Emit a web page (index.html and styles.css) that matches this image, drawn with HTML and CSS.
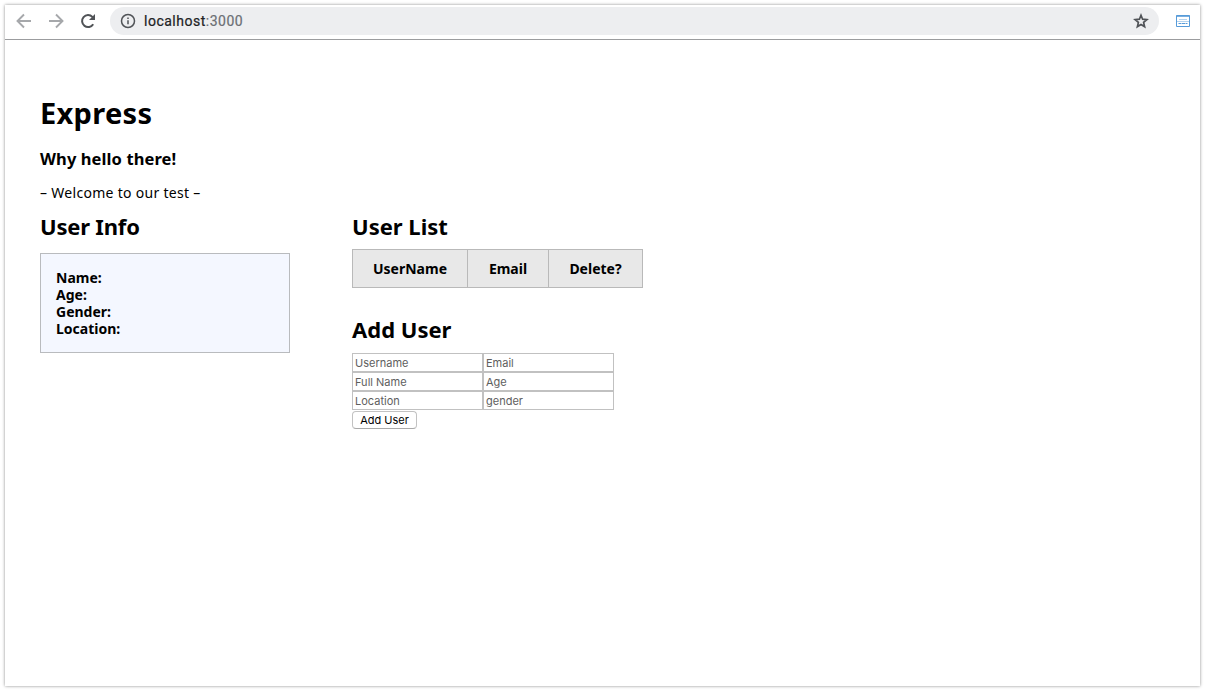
FILE: index.html
```html
<!DOCTYPE html>
<html lang="en">
<head>
<meta charset="utf-8">
<title>Express</title>
<link rel="stylesheet" href="styles.css">
</head>
<body>
<div class="window">
  <header class="toolbar">
    <svg class="icon back" viewBox="0 0 16 16"><path d="M15 8H2M8 1.5 1.5 8 8 14.5"/></svg>
    <svg class="icon forward" viewBox="0 0 16 16"><path d="M1 8h13M8 1.5 14.5 8 8 14.5"/></svg>
    <svg class="icon reload" viewBox="0 0 16 16"><path d="M13.2 11.2A6 6 0 1 1 12.4 3.9L14 5.5"/><path class="solid" d="M15 1v6H9z"/></svg>
    <div class="address">
      <svg class="icon info" viewBox="0 0 16 16"><circle cx="8" cy="8" r="6.5"/><path d="M8 7.2v4M8 4.4v1.6"/></svg>
      <span class="url">localhost<span class="port">:3000</span></span>
      <svg class="icon star" viewBox="0 0 16 16"><path d="m8 2.300 1.600 3.900 4.300.4-3.300 2.800 1 4.200L8 11.400l-3.600 2.200 1-4.200L2.100 6.600l4.300-.4z"/></svg>
    </div>
    <svg class="extension" viewBox="0 0 16 14"><path class="frame" d="M1.500 1.500h13v11h-13z"/><path class="bar" d="M1.500 2h13"/><path class="faint" d="M4 5.500h8"/><path class="faint" d="M2 7.500h12"/><path class="dash" d="M3.500 9.500h9"/></svg>
  </header>
  <main class="page">
    <h1 class="title">Express</h1>
    <h3 class="greeting">Why hello there!</h3>
    <p class="welcome">– Welcome to our test –</p>
    <div class="columns">
      <section class="info-column">
        <h2 class="heading user-info">User Info</h2>
        <div class="card"><b>Name:</b><b>Age:</b><b>Gender:</b><b>Location:</b></div>
      </section>
      <section class="list-column">
        <h2 class="heading user-list">User List</h2>
        <div class="table"><b class="cell">UserName</b><b class="cell">Email</b><b class="cell">Delete?</b></div>
        <h2 class="heading add-heading">Add User</h2>
        <div class="form">
          <input class="field" placeholder="Username"><input class="field" placeholder="Email">
          <input class="field" placeholder="Full Name"><input class="field" placeholder="Age">
          <input class="field" placeholder="Location"><input class="field" placeholder="gender">
        </div>
        <button class="submit">Add User</button>
      </section>
    </div>
  </main>
</div>
</body>
</html>
```
FILE: styles.css
```css
* { box-sizing: border-box; }
body { margin: 0; padding: 5px; background: #fff; font-family: "Noto Sans", sans-serif; color: #000; }
.window { height: 681px; width: 1195px; background: #fff; box-shadow: 0 0 3px rgba(0,0,0,.45); }
.toolbar { display: flex; align-items: center; height: 35px; padding: 0 9px 3px 11px; border-bottom: 1px solid #9b9c9e; }
.icon { width: 16px; height: 16px; flex: none; fill: none; stroke: #505357; stroke-width: 1.6; }
.back, .forward { stroke: #a6a8ab; stroke-width: 1.9; }
.forward { margin-left: 16px; }
.reload { margin-left: 16px; stroke-width: 2; }
.solid { fill: #505357; stroke: none; }
.address { display: flex; align-items: center; width: 1049px; height: 28px; margin-left: 14px; padding: 0 10px; border-radius: 14px; background: #edeef0; }
.info { stroke-width: 1.5; }
.url { flex: 1; margin-left: 8px; font: 14px/20px Roboto, sans-serif; letter-spacing: .5px; color: #202124; -webkit-text-stroke: .2px; }
.port { color: #6b6f74; }
.star { stroke-width: 1.7; }
.extension { width: 16px; height: 14px; margin-left: 16px; fill: none; stroke: #579bd9; stroke-width: 1; }
.bar { stroke-width: 1.6; }
.faint { stroke: #b5d3ee; }
.dash { stroke-dasharray: 3 .5; }
.page { padding: 53px 35px; }
.title, .greeting, .welcome, .heading { margin: 0; white-space: nowrap; }
.title { font-size: 29px; line-height: 40px; letter-spacing: .3px; }
.greeting { margin-top: 14px; font-size: 16.500px; line-height: 24px; letter-spacing: .1px; }
.welcome { margin-top: 12px; font-size: 14px; line-height: 20px; letter-spacing: .3px; }
.columns { display: flex; gap: 62px; margin-top: 7px; }
.info-column { width: 250px; }
.heading { font-size: 22px; line-height: 32px; }
.user-info { letter-spacing: -.2px; }
.card { height: 100px; margin-top: 11px; padding: 15px; border: 1px solid #b9bbbe; background: #f4f7ff; }
.card b { display: block; font-size: 14px; line-height: 17px; }
.table { display: flex; width: 291px; height: 39px; margin-top: 7px; border: 1px solid #b9b9b9; background: #e8e8e8; }
.cell { display: flex; align-items: center; justify-content: center; width: 114px; font-size: 14px; }
.cell + .cell { width: 81px; border-left: 1px solid #b9b9b9; }
.cell + .cell + .cell { width: 94px; }
.add-heading { margin-top: 25px; }
.form { display: grid; grid-template-columns: 131px 131px; grid-auto-rows: 19px; margin-top: 8px; }
.field { width: 131px; height: 19px; margin: 0; padding: 1px 2px; border: 1px solid #c1c1c1; border-radius: 0; font: 11px Inter, sans-serif; }
.field::placeholder { color: #5e5e5e; opacity: 1; }
.submit { display: block; width: 65px; height: 18px; margin-top: 1px; padding: 0; border: 1px solid #c2c2c2; border-bottom-color: #a9a9a9; border-radius: 4px; background: #fff; color: #000; font: 11px/15px Inter, sans-serif; }
```
